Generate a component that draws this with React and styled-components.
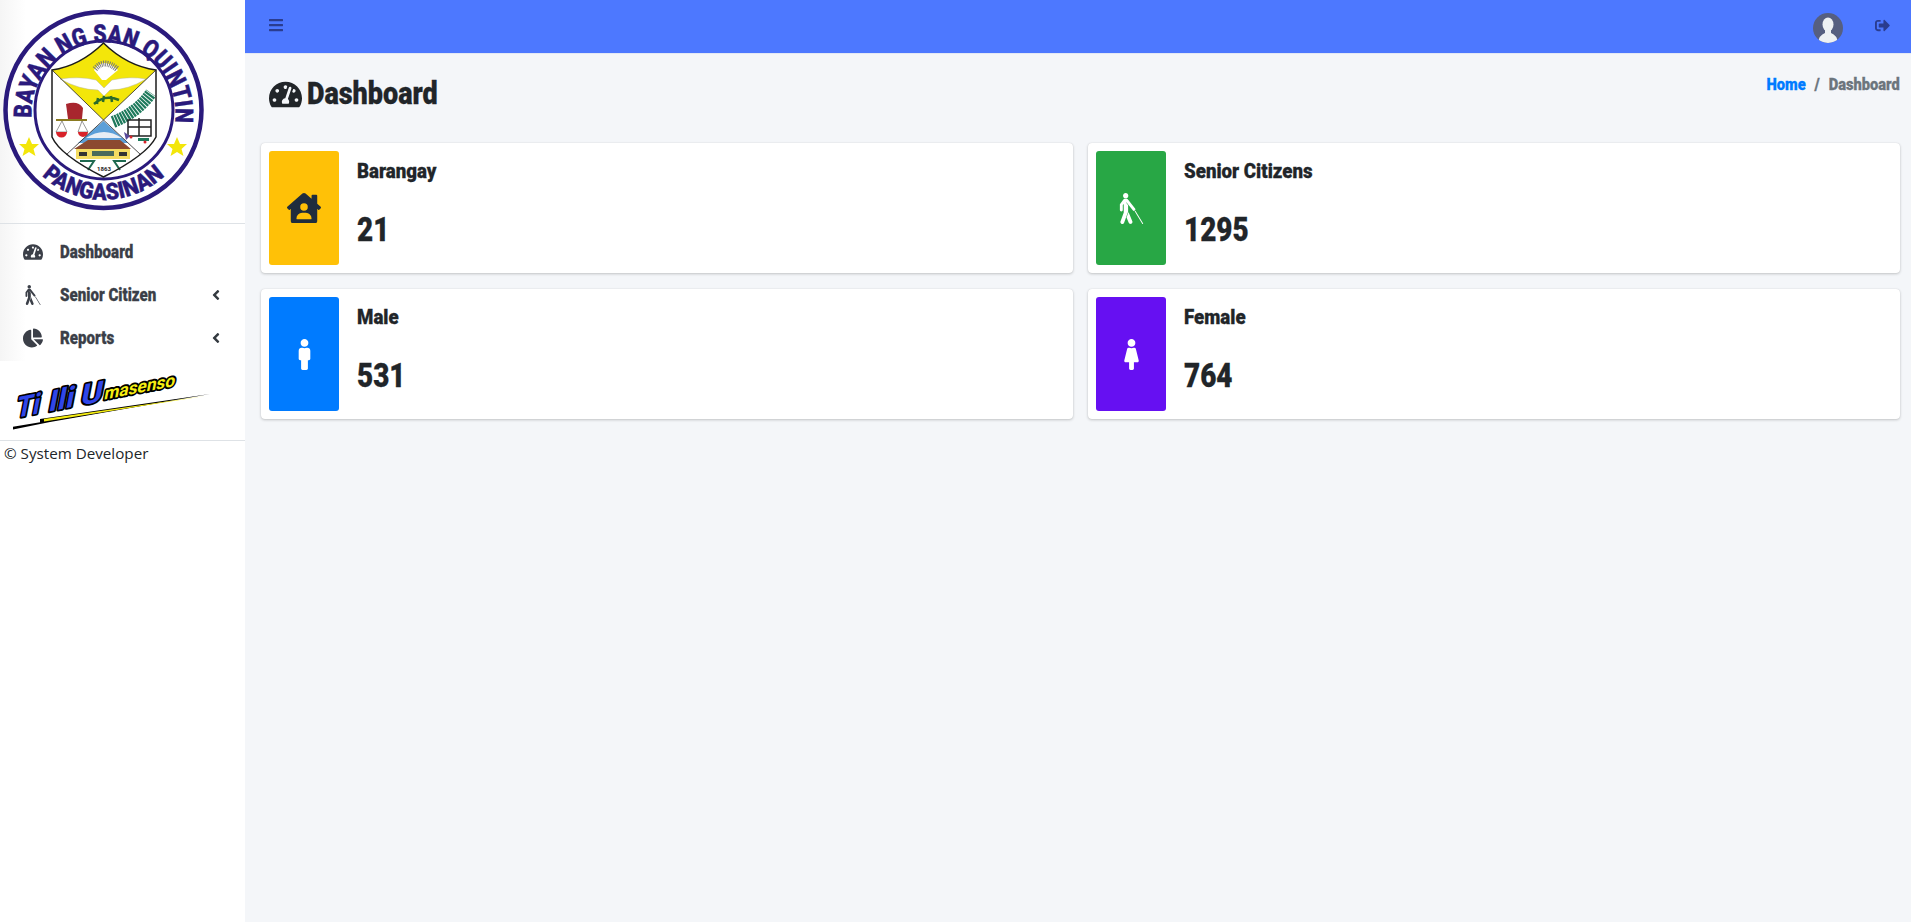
import styled, { createGlobalStyle } from 'styled-components';
import {
  FaTachometerAlt, FaBlind, FaChartPie, FaAngleLeft, FaBars, FaSignOutAlt,
  FaHouseUser, FaMale, FaFemale,
} from 'react-icons/fa';

const GlobalStyle = createGlobalStyle`
  html, body { margin: 0; padding: 0; }
  body {
    background: #f4f6f9;
    font-family: Roboto, "Liberation Sans", sans-serif;
    font-weight: 900;
    color: #212529;
    -webkit-text-stroke: 0.3px currentColor;
  }
  * { box-sizing: border-box; }
`;

const Layout = styled.div`
  display: flex;
  min-height: 100vh;
`;

const Sidebar = styled.aside`
  width: 245px;
  flex-shrink: 0;
  background: #fff;
`;

const Brand = styled.div`
  height: 224px;
  border-bottom: 1px solid #dee2e6;
  background: linear-gradient(90deg, #f5f5f5 0, #fff 26px);
  > svg { display: block; }
`;

const NavList = styled.ul`
  list-style: none;
  margin: 0;
  padding: 6px 0 1.500px;
  background: linear-gradient(90deg, #f5f5f5 0, #fff 26px);
`;

const NavItem = styled.li`
  display: flex;
  align-items: center;
  height: 43px;
  padding: 0 23px;
  color: #3b3f48;
  font-size: 18px;
  > svg:first-child {
    width: 20px;
    height: 20px;
    margin-right: 17px;
  }
  > span {
    flex: 1;
    transform: scaleX(0.84);
    transform-origin: left center;
  }
`;

const Chevron = styled(FaAngleLeft)`
  width: 12px;
  height: 16px;
  color: #343a40;
`;

const Slogan = styled.div`
  height: 80px;
  padding: 5px 0 0 13px;
  border-bottom: 1px solid #dee2e6;
  > svg { display: block; }
`;

const Credit = styled.div`
  padding: 2px 0 0 4px;
  font-family: "Open Sans", sans-serif;
  font-weight: 400;
  font-size: 15.2px;
  line-height: 20px;
  color: #212529;
  -webkit-text-stroke: 0;
`;

const Main = styled.main`
  flex: 1;
  min-width: 0;
`;

const Navbar = styled.nav`
  display: flex;
  align-items: center;
  height: 54px;
  padding: 0 21px 3px 24px;
  background: #4d78ff;
  border-bottom: 1px solid #e3e8f5;
  color: #2a3c8f;
`;

const Spacer = styled.div`
  flex: 1;
`;

const BarsIcon = styled(FaBars)`
  width: 14px;
  height: 16px;
`;

const LogoutIcon = styled(FaSignOutAlt)`
  width: 15px;
  height: 15px;
  margin-left: 32px;
`;

const Avatar = styled.svg`
  width: 30px;
  height: 30px;
  margin-top: 6px;
`;

const ContentHeader = styled.header`
  display: flex;
  justify-content: space-between;
  align-items: flex-start;
  height: 89px;
  padding: 19px 11px 0 24px;
`;

const PageTitle = styled.h1`
  display: flex;
  align-items: center;
  gap: 5px;
  margin: 0;
  font-size: 31px;
  line-height: 42px;
  font-weight: 900;
  color: #212529;
  > svg { width: 33px; height: 33px; }
  > span {
    transform: scaleX(0.87);
    transform-origin: left center;
  }
`;

const Breadcrumb = styled.div`
  display: flex;
  gap: 10px;
  font-size: 16.500px;
  line-height: 24px;
  color: #6c757d;
  transform: scaleX(0.89);
  transform-origin: right center;
  > a { color: #007bff; text-decoration: none; }
`;

const CardGrid = styled.section`
  display: grid;
  grid-template-columns: 1fr 1fr;
  gap: 16px 15px;
  padding: 0 11px 0 16px;
`;

const Card = styled.article`
  display: flex;
  height: 130px;
  padding: 8px;
  background: #fff;
  border-radius: 4px;
  box-shadow: 0 0 1px rgba(0, 0, 0, 0.13), 0 1px 3px rgba(0, 0, 0, 0.2);
`;

const IconBox = styled.div`
  display: flex;
  align-items: center;
  justify-content: center;
  width: 70px;
  height: 114px;
  border-radius: 3px;
  background: ${(p) => p.$bg};
  color: ${(p) => p.$fg};
  > svg { width: ${(p) => p.$size}px; height: ${(p) => p.$size}px; }
`;

const CardText = styled.div`
  padding: 7px 0 0 18px;
`;

const CardLabel = styled.div`
  font-size: 21px;
  line-height: 26px;
  transform: scaleX(0.89);
  transform-origin: left center;
`;

const CardValue = styled.div`
  margin-top: 25px;
  font-size: 34px;
  line-height: 40px;
  transform: scaleX(0.82);
  transform-origin: left center;
`;

// seal of the municipality, drawn by hand
function Seal() {
  const navy = '#2a1a7c';
  return (
    <svg width="245" height="223" viewBox="0 0 245 223">
      <defs>
        <path id="sealTop" d="M 31.600 118 A 72 72 0 1 1 175.400 118" />
        <path id="sealBottom" d="M 42 175.600 A 90 90 0 0 0 165 175.600" />
      </defs>
      <circle cx="103.500" cy="110" r="98" fill="#fff" stroke={navy} strokeWidth="4.500" />
      <circle cx="104" cy="110" r="69" fill="#fff" stroke={navy} strokeWidth="3" />
      <text fontFamily="Roboto" fontWeight="900" fontSize="25" fill={navy} stroke={navy} strokeWidth="0.400">
        <textPath href="#sealTop" textLength="238" lengthAdjust="spacingAndGlyphs">BAYAN NG SAN QUINTIN</textPath>
      </text>
      <text fontFamily="Roboto" fontWeight="900" fontSize="23" fill={navy} stroke={navy} strokeWidth="0.400">
        <textPath href="#sealBottom" textLength="135" lengthAdjust="spacingAndGlyphs">PANGASINAN</textPath>
      </text>
      <polygon fill="#f3e60a" points="29,137 32,144 39,144 33.500,149 35.500,156 29,152 22.500,156 24.500,149 19,144 26,144" />
      <polygon fill="#f3e60a" points="177,137 180,144 187,144 181.500,149 183.500,156 177,152 170.500,156 172.500,149 167,144 174,144" />
      {/* shield */}
      <path d="M103.500 43 Q 80 66 52 70 V 137 Q 60 155 103.500 177 Q 147 155 156 137 V 70 Q 127 66 103.500 43 Z" fill="#fff" />
      <path d="M103.500 43 Q 80 66 52 70 L 103.500 120 L 156 70 Q 127 66 103.500 43 Z" fill="#f3e60a" />
      {/* dove */}
      <path d="M60 79 Q 80 76 96 80 L 104 88 L 112 80 Q 130 76 146 79 Q 128 90 110 90 L 104 96 L 98 90 Q 80 90 60 79 Z" fill="#fff" stroke="#b9b9a0" strokeWidth="0.500" />
      <path d="M94 70 Q 103 56 118 70 L 106 80 H 102 Z" fill="#fff" />
      <path d="M95 69 Q 104 58 117 69" fill="none" stroke="#777" strokeWidth="6" strokeDasharray="1 1" />
      <path d="M94 104 Q 105 94 119 100 M98 98 L 97 104 M104 96 L 103 102 M111 96 L 112 102" fill="none" stroke="#2a6a2a" strokeWidth="2.500" />
      {/* fist and scales */}
      <path d="M66 104 Q 78 100 83 108 L 82 119 H 68 Z" fill="#a8262e" />
      <path d="M56 120 H 87" stroke="#8a7a20" strokeWidth="2" />
      <path d="M62 121 L 56 132 H 67 Z M 82 121 L 78 132 H 88 Z" fill="none" stroke="#555" strokeWidth="0.600" />
      <path d="M56 132 A 5.500 5.500 0 0 0 67 132 Z M 78 132 A 5 5 0 0 0 88 132 Z" fill="#d8232a" />
      {/* palm frond and window */}
      <path d="M113 122 Q 138 112 151 93" fill="none" stroke="#1f7a5c" strokeWidth="12" strokeDasharray="2.200 0.800" />
      <path d="M128 120 H 151 V 136 H 128 Z M 139 118 V 136 M 128 127 H 151" fill="none" stroke="#222" strokeWidth="1.500" />
      <path d="M124 132 L 130 136 L 126 140 Z" fill="#5a4a9a" />
      <path d="M138 138 H 149 V 141 H 138 Z" fill="#1f7a5c" />
      <circle cx="131" cy="137" r="1.500" fill="#d8232a" />
      <circle cx="145" cy="142" r="1.500" fill="#d8232a" />
      {/* sky, building, grounds */}
      <path d="M103.500 121 L 141 155 Q 125 167 103.500 177 Q 82 167 66 155 Z" fill="#fff" />
      <path d="M103.500 121 L 128 143 H 78 Z" fill="#5b9fd8" />
      <path d="M86 138 Q 104 126 122 138 Z" fill="#e8eef5" />
      <path d="M74 149 L 88 140 H 120 L 131 149 Z" fill="#8c4a30" />
      <rect x="76" y="149" width="54" height="10" fill="#f4dc62" />
      <rect x="79" y="152" width="8" height="4" fill="#333" />
      <rect x="92" y="151" width="22" height="5" fill="#4a6a5a" />
      <rect x="119" y="152" width="8" height="4" fill="#333" />
      <path d="M80 161 H 94 L 88 170 M 126 161 H 114 L 120 170" fill="none" stroke="#1f6a50" strokeWidth="2" />
      <text x="104" y="171" textAnchor="middle" fontFamily="Roboto" fontSize="6" fontWeight="700" fill="#222">1863</text>
      {/* shield outline and divisions */}
      <path d="M103.500 43 Q 80 66 52 70 V 137 Q 60 155 103.500 177 Q 147 155 156 137 V 70 Q 127 66 103.500 43 Z" fill="none" stroke="#1c1c1c" strokeWidth="1.500" />
      <path d="M52 70 L 103.500 120 L 156 70 M 66 155 L 103.500 120 L 141 155" fill="none" stroke="#222" strokeWidth="0.800" />
    </svg>
  );
}

function SloganMark() {
  return (
    <svg width="205" height="70" viewBox="0 -10 205 70">
      <polygon points="-2,51 197,18 37,46 -2,54" fill="#000" />
      <polygon points="27,43 197,18 27,47" fill="#000" />
      <polygon points="31,43 192,20 31,45.500" fill="#f6ee12" />
      <g transform="translate(2 42) rotate(-11) skewX(-22)" fontFamily="Roboto" fontWeight="700" stroke="#000" strokeWidth="3.500" paintOrder="stroke" strokeLinejoin="round">
        <text x="0" y="0" fontSize="28" fill="#3046e8" textLength="24" lengthAdjust="spacingAndGlyphs">Ti</text>
        <text x="33" y="0" fontSize="28" fill="#3046e8" textLength="26" lengthAdjust="spacingAndGlyphs">Ili</text>
        <text x="66" y="0" fontSize="28" fill="#3046e8" textLength="22" lengthAdjust="spacingAndGlyphs">U</text>
        <text x="90" y="-1" fontSize="17" fill="#f6ee12" textLength="72" lengthAdjust="spacingAndGlyphs">masenso</text>
      </g>
    </svg>
  );
}

function App() {
  return (
    <Layout>
      <GlobalStyle />
      <Sidebar>
        <Brand>
          <Seal />
        </Brand>
        <NavList>
          <NavItem><FaTachometerAlt /><span>Dashboard</span></NavItem>
          <NavItem><FaBlind /><span>Senior Citizen</span><Chevron /></NavItem>
          <NavItem><FaChartPie /><span>Reports</span><Chevron /></NavItem>
        </NavList>
        <Slogan>
          <SloganMark />
        </Slogan>
        <Credit>© System Developer</Credit>
      </Sidebar>
      <Main>
        <Navbar>
          <BarsIcon />
          <Spacer />
          <Avatar viewBox="0 0 30 30">
            <clipPath id="avatarClip"><circle cx="15" cy="15" r="15" /></clipPath>
            <g clipPath="url(#avatarClip)">
              <rect width="30" height="30" fill="#565f80" />
              <ellipse cx="15" cy="11.500" rx="5.500" ry="7" fill="#eef1f3" />
              <path d="M12 17 L 12 20 Q 6 22 5 30 H 25 Q 24 22 18 20 L 18 17 Z" fill="#eef1f3" />
            </g>
          </Avatar>
          <LogoutIcon />
        </Navbar>
        <ContentHeader>
          <PageTitle><FaTachometerAlt /><span>Dashboard</span></PageTitle>
          <Breadcrumb><a href="#home">Home</a><span>/</span><span>Dashboard</span></Breadcrumb>
        </ContentHeader>
        <CardGrid>
          <Card>
            <IconBox $bg="#ffc107" $fg="#1f2d3d" $size={34}><FaHouseUser /></IconBox>
            <CardText><CardLabel>Barangay</CardLabel><CardValue>21</CardValue></CardText>
          </Card>
          <Card>
            <IconBox $bg="#28a745" $fg="#fff" $size={31}><FaBlind /></IconBox>
            <CardText><CardLabel>Senior Citizens</CardLabel><CardValue>1295</CardValue></CardText>
          </Card>
          <Card>
            <IconBox $bg="#007bff" $fg="#fff" $size={31}><FaMale /></IconBox>
            <CardText><CardLabel>Male</CardLabel><CardValue>531</CardValue></CardText>
          </Card>
          <Card>
            <IconBox $bg="#6610f2" $fg="#fff" $size={31}><FaFemale /></IconBox>
            <CardText><CardLabel>Female</CardLabel><CardValue>764</CardValue></CardText>
          </Card>
        </CardGrid>
      </Main>
    </Layout>
  );
}

export default App;
